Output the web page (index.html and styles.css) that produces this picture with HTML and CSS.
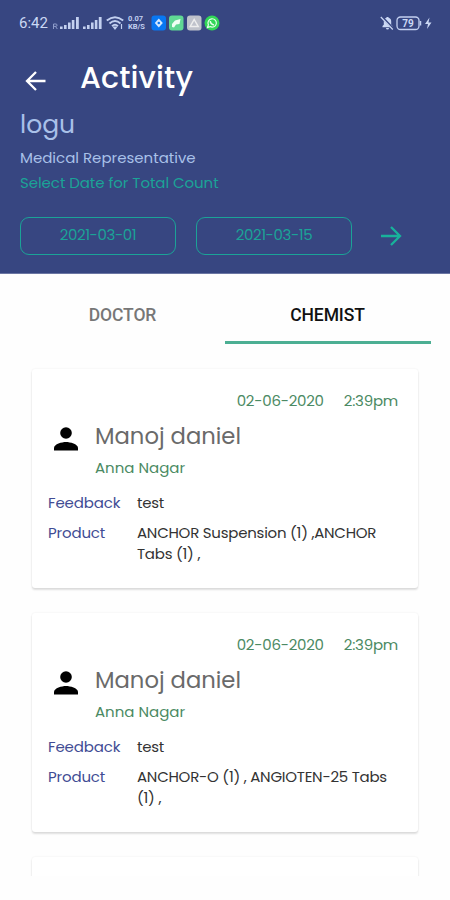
FILE: index.html
```html
<!DOCTYPE html>
<html lang="en">
<head>
    <meta charset="UTF-8">
    <meta name="viewport" content="width=device-width, initial-scale=1.0">
    <title>Activity</title>
    <link rel="stylesheet" href="styles.css">
</head>
<body>

    <header class="header">
        <!-- Phone status bar -->
        <div class="status-bar">
            <span class="clock">6:42</span>
            <svg class="signals" width="50" height="16" viewBox="0 0 50 16" fill="#c3d0f0">
                <path d="M1.500 14V9h2.500q1 0 1 1.200t-1 1.200H1.500M3.500 11.500l1.800 2.500" fill="none" stroke="#8e9cca" stroke-width="1"/>
                <path d="M8 11.500h2.600V14H8zM12 10h2.600v4H12zM16 7.500h2.600V14H16zM19.800 5h2.600v9h-2.600zM24 2h2.800v12H24z"/>
                <path d="M31 11.500h2.600V14H31zM35 10h2.600v4H35zM39 7.500h2.600V14H39zM42.800 5h2.600v9h-2.600zM46.800 2h2.800v12h-2.800z"/>
            </svg>
            <svg class="wifi" width="18" height="16" viewBox="0 0 18 16" fill="none" stroke="#c3d0f0" stroke-width="1.900">
                <path d="M.8 5.600Q9-1.200 17.200 5.600M3.500 8.400Q9 3.800 14.500 8.400M6 11.100Q9 8.400 12 11.100"/>
                <path d="M7.500 12h3l-1.500 2zM15.500 9v5" fill="#c3d0f0" stroke-width="1.200"/>
            </svg>
            <span class="net-speed"><span>0.07</span><span>KB/S</span></span>
            <svg class="app-icons" width="70" height="16" viewBox="0 0 70 16">
                <rect x=".5" y=".5" width="14.500" height="15" rx="3" fill="#0877f2"/>
                <path d="M7.800 3.500l4 4.500-4 4.500-4-4.500z" fill="#d5e9ff"/>
                <circle cx="7.800" cy="8" r="1.300" fill="#0877f2"/>
                <rect x="18" y=".5" width="14.500" height="15" rx="3" fill="#60d894"/>
                <path d="M21 12V9l3-3.500 5.500-1.500-1 5-3.500.5-2 3z" fill="#f0fff5"/>
                <rect x="36" y=".5" width="14.500" height="15" rx="3" fill="#bfc2cb"/>
                <path d="M43.200 4.500l4 7h-8z" fill="none" stroke="#eee" stroke-width="1.500"/>
                <circle cx="61" cy="8" r="7.500" fill="#32d657"/>
                <path d="M56.500 12.500l.9-2.700a4.200 4.200 0 1 1 1.700 1.800z" fill="none" stroke="#e6ffe9" stroke-width="1.200"/>
                <path d="M59.300 6q0 3 3.700 4" fill="none" stroke="#e6ffe9" stroke-width="1.500"/>
            </svg>
            <svg class="battery" width="54" height="16" viewBox="0 0 54 16">
                <path d="M2.500 12.200V11l1.300-1.300V6.500q0-3 2.700-3.700V2h2v.8q2.700.7 2.700 3.700v3.200l1.300 1.300v1.200zM6 13h3q0 1.500-1.500 1.500T6 13z" fill="#cbd8f4"/>
                <path d="M1.500 1.500l12 12.500" stroke="#374681" stroke-width="2.500"/>
                <path d="M.8 2l12 12.500" stroke="#cbd8f4" stroke-width="1.200"/>
                <rect x="17" y="2" width="22" height="12.500" rx="3.500" fill="none" stroke="#c3d0f0" stroke-width="1.300"/>
                <path d="M40.500 6v4.500" stroke="#c3d0f0" stroke-width="1.500"/>
                <text class="battery-level" x="28" y="11.700" text-anchor="middle">79</text>
                <path d="M49.500 2.500L45 9h3l-1 5 4.500-6.500h-3z" fill="#cbd8f4"/>
            </svg>
        </div>

        <div class="title-row">
            <svg class="back" width="22" height="20" viewBox="0 0 22 20" fill="none" stroke="#fff" stroke-width="2.300">
                <path d="M20.500 10H2.500M11 1L2 10l9 9"/>
            </svg>
            <h1>Activity</h1>
        </div>

        <div class="user-name">logu</div>
        <div class="user-role">Medical Representative</div>
        <div class="date-label">Select Date for Total Count</div>

        <div class="date-row">
            <button class="date-btn">2021-03-01</button>
            <button class="date-btn">2021-03-15</button>
            <svg class="go" width="22" height="20" viewBox="0 0 22 20" fill="none" stroke="#18b29b" stroke-width="2.300">
                <path d="M1 10h18.500M11 1l9 9-9 9"/>
            </svg>
        </div>
    </header>

    <nav class="tabs">
        <div class="tab">DOCTOR</div>
        <div class="tab active">CHEMIST</div>
    </nav>

    <main class="list">
        <div class="card">
            <div class="card-date"><span class="day">02-06-2020</span><span class="time">2:39pm</span></div>
            <div class="person">
                <svg class="avatar" width="24" height="24" viewBox="0 0 24 24">
                    <circle cx="12" cy="6" r="5.800"/>
                    <path d="M0 23.500v-2.500c0-4 8-6 12-6s12 2 12 6v2.500z"/>
                </svg>
                <div>
                    <div class="name">Manoj daniel</div>
                    <div class="place">Anna Nagar</div>
                </div>
            </div>
            <div class="row"><span class="label">Feedback</span><span class="value">test</span></div>
            <div class="row"><span class="label">Product</span><span class="value">ANCHOR Suspension (1) ,ANCHOR<br>Tabs (1) ,</span></div>
        </div>

        <div class="card">
            <div class="card-date"><span class="day">02-06-2020</span><span class="time">2:39pm</span></div>
            <div class="person">
                <svg class="avatar" width="24" height="24" viewBox="0 0 24 24">
                    <circle cx="12" cy="6" r="5.800"/>
                    <path d="M0 23.500v-2.500c0-4 8-6 12-6s12 2 12 6v2.500z"/>
                </svg>
                <div>
                    <div class="name">Manoj daniel</div>
                    <div class="place">Anna Nagar</div>
                </div>
            </div>
            <div class="row"><span class="label">Feedback</span><span class="value">test</span></div>
            <div class="row"><span class="label">Product</span><span class="value">ANCHOR-O (1) , ANGIOTEN-25 Tabs<br>(1) ,</span></div>
        </div>

        <div class="card"></div>
    </main>

</body>
</html>
```
FILE: styles.css
```css
* {
    box-sizing: border-box;
}

body {
    margin: 0;
    height: 900px;
    overflow: hidden;
    background-color: #fefefe;
    font-family: Poppins, Inter, sans-serif;
    font-size: 15px;
    white-space: nowrap;
}

.header {
    height: 274px;
    padding: 0 20px;
    background-color: #374681;
    border-bottom: 1px solid #6b76a3;
}

/* Status bar */
.status-bar {
    display: flex;
    align-items: center;
    height: 46px;
    margin-right: -4px;
}

.clock {
    width: 32px;
    margin-left: -1px;
    color: #cbd8f4;
    font-family: Roboto, sans-serif;
    font-size: 15px;
}

.signals {
    flex: none;
    margin-left: 1px;
}

.wifi {
    margin-left: 4px;
}

.net-speed {
    display: flex;
    flex-direction: column;
    width: 18px;
    margin-left: 4px;
    color: #c3d0f0;
    font-family: Roboto, sans-serif;
    font-size: 7.5px;
    font-weight: 700;
    line-height: 8px;
}

.app-icons {
    margin-left: 5px;
}

.battery {
    margin-left: auto;
}

.battery-level {
    fill: #cbd8f4;
    font-family: Roboto, sans-serif;
    font-size: 10px;
    font-weight: 700;
}

/* Title and user */
.title-row {
    display: flex;
    align-items: center;
    height: 62px;
    padding-left: 5px;
}

.back {
    margin-top: 8px;
}

h1 {
    margin: 2px 0 0 33px;
    color: #fff;
    font-size: 30px;
    font-weight: 500;
    letter-spacing: 0.15px;
    line-height: 40px;
}

.user-name {
    color: #a9c1e9;
    font-size: 25px;
    line-height: 33px;
}

.user-role,
.date-label {
    color: #a9c1e9;
    line-height: 25px;
}

.user-role {
    margin-top: 4px;
}

.date-label {
    color: #1ba397;
    letter-spacing: -0.06px;
}

.date-row {
    display: flex;
    align-items: center;
    gap: 20px;
    margin-top: 22px;
}

.date-btn {
    width: 156px;
    height: 38px;
    padding: 0 0 4px;
    border: 1.5px solid #1ba397;
    border-radius: 9px;
    background: none;
    color: #1ba397;
    font: inherit;
    letter-spacing: -0.4px;
}

.go {
    margin-left: 8px;
}

/* Tabs */
.tabs {
    display: flex;
    height: 70px;
    padding: 10px 19px 0 20px;
}

.tab {
    flex: 1;
    color: #777;
    font-family: Roboto, sans-serif;
    font-size: 17.5px;
    font-weight: 500;
    letter-spacing: -0.1px;
    line-height: 62px;
    text-align: center;
}

.tab.active {
    padding-right: 1px;
    border-bottom: 3px solid #4caf93;
    color: #111;
}

/* Visit cards */
.list {
    height: 532px;
    padding: 25px 32px 0;
    overflow: hidden;
}

.card {
    height: 219px;
    margin-bottom: 25px;
    padding: 21px 16px;
    border-radius: 3px;
    background-color: #fff;
    box-shadow: 0 2px 2px rgba(0, 0, 0, 0.12), 0 0 2px rgba(0, 0, 0, 0.08);
}

.card-date {
    display: flex;
    justify-content: flex-end;
    gap: 20px;
    padding-right: 4px;
    color: #4b8a63;
    letter-spacing: -0.25px;
    line-height: 22px;
}

.person {
    display: flex;
    margin-top: 8px;
    padding-left: 6px;
}

.avatar {
    margin: 7px 17px 0 0;
}

.name {
    color: #6a6a6a;
    font-size: 22.7px;
    line-height: 32px;
}

.place {
    color: #4b8a63;
    line-height: 32px;
}

.row {
    display: flex;
    margin-top: 9px;
    line-height: 21px;
}

.person + .row {
    margin-top: 8px;
}

.label {
    width: 89px;
    color: #414c94;
    letter-spacing: -0.15px;
}

.value {
    color: #333;
    letter-spacing: -0.25px;
}
```
